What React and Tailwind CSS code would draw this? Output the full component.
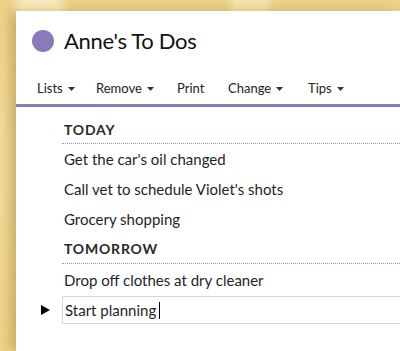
export default function App() {
  const menu = [
    { label: 'Lists', caret: true, w: 'w-[59px]' },
    { label: 'Remove', caret: true, w: 'w-[81px]' },
    { label: 'Print', caret: false, w: 'w-[51px]' },
    { label: 'Change', caret: true, w: 'w-[80px]' },
    { label: 'Tips', caret: true, w: 'w-[60px]' },
  ]

  const Caret = () => (
    <svg width="7" height="4" viewBox="0 0 7 4" className="ml-[5px] mt-[1px]">
      <path d="M0 0h7L3.5 4z" fill="#333" />
    </svg>
  )

  return (
    <div className="w-[400px] h-[351px] overflow-hidden bg-[radial-gradient(circle_at_40px_10px,#f8e9bd_0,#f8e9bd_18px,transparent_30px),radial-gradient(circle_at_250px_5px,#f6e4ad_0,#f6e4ad_14px,transparent_24px),linear-gradient(180deg,#eed28a_0%,#f2dc9c_45%,#eed389_100%)] pt-[11px] pl-[16px] font-['Lato',sans-serif] text-[#1e1e24]">
      <div className="h-[340px] bg-white shadow-[-6px_0_10px_rgba(150,115,35,0.4)]">
        <div className="flex items-center h-[58px] pt-[2px] pl-[16px]">
          <div className="w-[22px] h-[22px] rounded-full bg-[#8a79bd]" />
          <div className="ml-[10px] text-[22px] leading-none tracking-[-0.3px] text-[#111]">Anne's To Dos</div>
        </div>
        <div className="flex items-center h-[38px] pt-[4px] pl-[21px] text-[13px] text-[#222] border-b-[3px] border-[#8a7bba]">
          {menu.map((m) => (
            <div key={m.label} className={`flex items-center ${m.w}`}>
              <span>{m.label}</span>
              {m.caret && <Caret />}
            </div>
          ))}
        </div>
        <div className="pl-[46px] pt-[8px] text-[15px] text-[#1f1f2a]">
          <div className="h-[28px] flex items-center pl-[2px] text-[14px] font-bold tracking-[0.8px] text-[#2a2a2a]">TODAY</div>
          <div className="border-b border-dotted border-[#9a8de0]" />
          <div className="h-[30px] flex items-center pl-[2px]">Get the car's oil changed</div>
          <div className="h-[30px] flex items-center pl-[2px]">Call vet to schedule Violet's shots</div>
          <div className="h-[30px] flex items-center pl-[2px]">Grocery shopping</div>
          <div className="h-[29px] flex items-center pl-[2px] text-[14px] font-bold tracking-[0.8px] text-[#2a2a2a]">TOMORROW</div>
          <div className="border-b border-dotted border-[#9a8de0]" />
          <div className="h-[33px] flex items-center pl-[2px] border-b border-[#d6d6d6]">Drop off clothes at dry cleaner</div>
          <div className="relative">
            <div className="absolute left-[-21px] top-[8px] w-0 h-0 border-y-[5px] border-y-transparent border-l-[9px] border-l-black" />
            <div className="h-[27px] flex items-center pl-[2px] border-l border-b border-[#d6d6d6]">
              Start planning<span className="ml-[3px] inline-block w-[1px] h-[17px] bg-black" />
            </div>
          </div>
        </div>
      </div>
    </div>
  )
}
